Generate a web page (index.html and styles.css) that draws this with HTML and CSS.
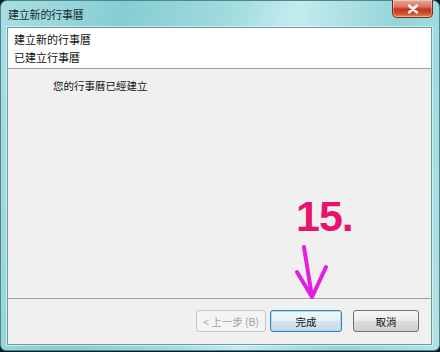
FILE: index.html
```html
<!DOCTYPE html>
<html>
<head>
<meta charset="utf-8">
<link rel="stylesheet" href="styles.css">
</head>
<body>
<div class="screen">
  <div class="window">
    <div class="titlebar">
      <span class="title">建立新的行事曆</span>
      <button class="close" aria-label="close">
        <svg width="12" height="10" viewBox="0 0 12 10"><path d="M2 1.5 L10 8.5 M10 1.5 L2 8.5" stroke="#fff" stroke-width="2.4" stroke-linecap="round"/></svg>
      </button>
    </div>
    <div class="client">
      <div class="header">
        <div class="h-title">建立新的行事曆</div>
        <div class="h-sub">已建立行事曆</div>
      </div>
      <div class="content">
        <p class="msg">您的行事曆已經建立</p>
        <div class="annot">
          <span class="step">15.</span>
          <svg class="arrow" width="40" height="56" viewBox="0 0 40 56">
            <path d="M11 2 L19 52 M4 27 L19 52 L33 22" fill="none" stroke="#e41ee0" stroke-width="4" stroke-linecap="round" stroke-linejoin="round"/>
          </svg>
        </div>
      </div>
      <div class="footer">
        <button class="btn disabled">&lt; 上一步 (B)</button>
        <button class="btn primary">完成</button>
        <button class="btn cancel">取消</button>
      </div>
    </div>
  </div>
</div>
</body>
</html>
```

FILE: styles.css
```css
html, body {
  margin: 0;
  padding: 0;
  background: #0c1a26;
}
body {
  width: 440px;
  height: 352px;
  overflow: hidden;
  font-family: "Noto Sans CJK TC", "Noto Sans", sans-serif;
}
.screen {
  width: 440px;
  height: 352px;
  background: #0c1a26;
}
.window {
  width: 440px;
  height: 351px;
  box-sizing: border-box;
  border-radius: 7px 7px 6px 6px;
  background: linear-gradient(100deg, #a9dfe2 0%, #86cdd2 25%, #9fdadd 45%, #c4ecee 60%, #94d4d8 80%, #b1e3e6 100%);
  border: 1px solid #4f8790;
  display: flex;
  flex-direction: column;
  padding: 0 7px 5px 6px;
}
.titlebar {
  height: 26px;
  display: flex;
  align-items: flex-start;
  justify-content: space-between;
  position: relative;
}
.title {
  font-size: 11px;
  color: #1a2a30;
  margin-top: 5px;
  margin-left: 1px;
  letter-spacing: -0.2px;
}
.close {
  width: 41px;
  height: 18px;
  margin-top: -1px;
  margin-right: -1px;
  border: 1px solid #7a2a20;
  border-top: none;
  border-radius: 0 0 5px 5px;
  background: linear-gradient(180deg, #e8a898 0%, #d9735e 40%, #c2351c 55%, #d0512c 80%, #e48a60 100%);
  display: flex;
  align-items: center;
  justify-content: center;
  padding: 0;
  box-shadow: inset 0 0 0 1px rgba(255,255,255,0.35);
}
.client {
  flex: 1;
  display: flex;
  flex-direction: column;
  background: #f0f0f0;
  border: 1px solid #6d9aa0;
  box-shadow: 0 0 0 1px rgba(255,255,255,0.5);
}
.header {
  height: 41px;
  background: #ffffff;
  border-bottom: 1px solid #a0a0a0;
  padding: 2px 0 0 6px;
  box-sizing: border-box;
  font-size: 11px;
  color: #111;
  line-height: 18px;
}
.content {
  flex: 1;
  position: relative;
  border-bottom: 1px solid #a0a0a0;
}
.msg {
  margin: 0;
  padding: 10px 0 0 45px;
  font-size: 10.5px;
  color: #111;
  line-height: 14px;
}
.annot {
  position: absolute;
  left: 285px;
  top: 126px;
  width: 70px;
}
.step {
  display: block;
  font-family: "Liberation Sans", Arial, sans-serif;
  font-weight: bold;
  font-size: 43px;
  line-height: 43px;
  color: #e8136f;
  letter-spacing: -1px;
  margin-left: 3px;
}
.arrow {
  display: block;
  margin-top: 7px;
}
.footer {
  height: 45px;
  display: flex;
  align-items: center;
  justify-content: flex-end;
  padding: 0 12px 1px 0;
  box-sizing: border-box;
  gap: 4px;
}
.btn {
  height: 22px;
  box-sizing: border-box;
  font-family: "Noto Sans CJK TC", "Noto Sans", sans-serif;
  font-size: 10.5px;
  border-radius: 3px;
  padding: 0;
  color: #111;
  border: 1px solid #707070;
  background: linear-gradient(180deg, #f6f6f6 0%, #ebebeb 48%, #dddddd 52%, #cfcfcf 100%);
}
.btn.disabled {
  width: 70px;
  color: #a0a0a0;
  border-color: #c4c4c4;
  background: #f4f4f4;
}
.btn.primary {
  width: 72px;
  border-color: #3c7fb1;
  box-shadow: inset 0 0 0 1px #a7dcf5;
  background: linear-gradient(180deg, #f2f8fc 0%, #e4eff6 48%, #d2e4ef 52%, #c5dbe9 100%);
}
.btn.cancel {
  width: 66px;
  margin-left: 7px;
}
```
